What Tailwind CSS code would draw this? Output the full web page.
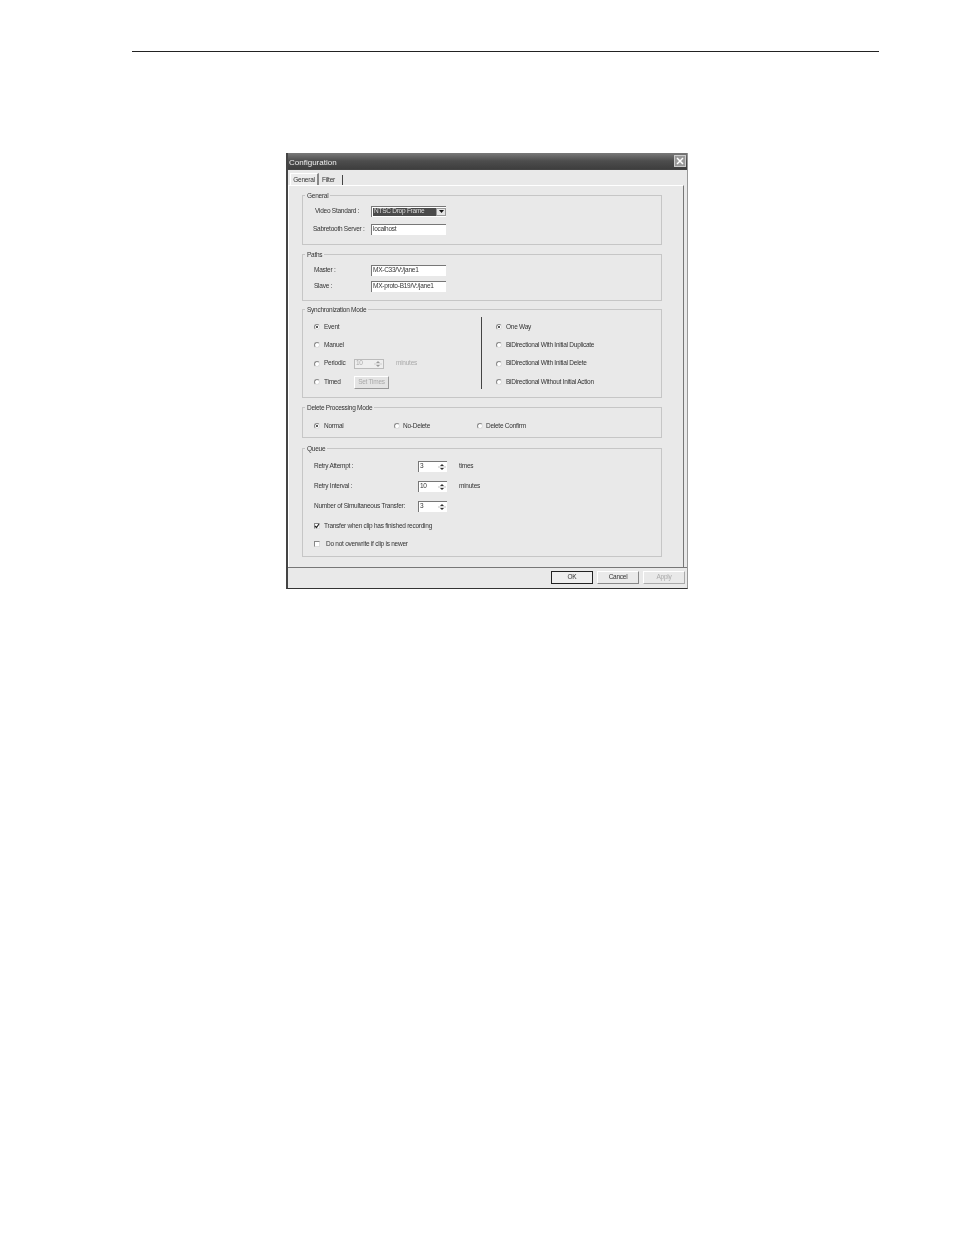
<!DOCTYPE html>
<html lang="en">
<head>
<meta charset="UTF-8">
<title>Configuration</title>
<script src="https://cdn.jsdelivr.net/npm/@tailwindcss/browser@4"></script>
</head>
<body class="bg-white font-['Liberation_Sans',sans-serif]">
  <!-- Page rule -->
  <div class="pt-[51px] pl-[132px]">
    <div class="w-[747px] h-px bg-[#222]"></div>
  </div>

  <!-- Dialog -->
  <div class="mt-[101px] ml-[286px] w-[402px] h-[436px] flex flex-col bg-[#e9e9e9] border-l-2 border-b border-r border-l-[#444] border-b-[#333] border-r-[#999] text-[6.5px] tracking-[-0.25px] leading-none text-[#333] blur-[0.3px]">
    <!-- Title bar -->
    <div class="h-[17px] flex items-center justify-between pl-px pr-px bg-gradient-to-b from-[#7a7a7a] via-[#4d4d4d] to-[#3e3e3e] border-b border-[#444]">
      <span class="pt-[3px] text-[8px] tracking-[0px] text-[#eee]">Configuration</span>
      <span class="w-[12px] h-[12px] flex items-center justify-center bg-[#999] border border-[#ccc]">
        <svg width="8" height="8" viewBox="0 0 8 8"><path d="M1 1L7 7M7 1L1 7" stroke="#fff" stroke-width="1.5"/></svg>
      </span>
    </div>

    <!-- Tabs -->
    <div class="h-[15px] flex items-end pl-[2px]">
      <div class="w-[29px] h-[12px] flex items-center justify-center pt-px bg-[#ededed] border-t border-l border-white border-r-2 border-r-[#888]">General</div>
      <div class="w-[24px] h-[10px] flex items-center pl-[3px] border-r border-[#444]">Filter</div>
    </div>

    <!-- Tab panel -->
    <div class="mr-[3px] h-[382px] pt-[9px] pl-[13px] pr-[21px] border-t border-l border-r border-t-white border-l-white border-r-[#777]">
      <!-- General -->
      <div class="relative h-[50px] border border-[#c6c6c6] pt-[6px]">
        <span class="absolute -top-[3px] left-[2px] px-[2px] bg-[#e9e9e9]">General</span>
        <div class="flex items-center h-[18px]">
          <span class="w-[68px] pl-[12px]">Video Standard :</span>
          <div class="flex items-center w-[75px] h-[11px] bg-white border-t border-l border-[#777] pl-px py-px">
            <span class="flex-1 h-full flex items-center pl-px bg-[#4a4a4a] text-[#ddd]">NTSC Drop Frame</span>
            <span class="w-[10px] h-full flex items-center justify-center bg-[#e4e4e4] border border-[#999]">
              <svg width="5" height="3" viewBox="0 0 5 3"><path d="M0 0H5L2.5 3Z" fill="#111"/></svg>
            </span>
          </div>
        </div>
        <div class="flex items-center h-[18px]">
          <span class="w-[68px] pl-[10px] whitespace-nowrap">Sabretooth Server :</span>
          <span class="w-[75px] h-[11px] flex items-center pl-px bg-white border-t border-l border-[#777]">localhost</span>
        </div>
      </div>

      <!-- Paths -->
      <div class="relative mt-[9px] h-[47px] border border-[#c6c6c6] pt-[7px]">
        <span class="absolute -top-[3px] left-[2px] px-[2px] bg-[#e9e9e9]">Paths</span>
        <div class="flex items-center h-[16px]">
          <span class="w-[68px] pl-[11px]">Master :</span>
          <span class="w-[75px] h-[11px] flex items-center pl-px bg-white border-t border-l border-[#777]">MX-C33/V:/jane1</span>
        </div>
        <div class="flex items-center h-[16px]">
          <span class="w-[68px] pl-[11px]">Slave :</span>
          <span class="w-[75px] h-[11px] flex items-center pl-px bg-white border-t border-l border-[#777]">MX-proto-B19/V:/jane1</span>
        </div>
      </div>

      <!-- Synchronization Mode -->
      <div class="relative mt-[8px] h-[89px] border border-[#c6c6c6] pt-[8px] flex">
        <span class="absolute -top-[3px] left-[2px] px-[2px] bg-[#e9e9e9]">Synchronization Mode</span>
        <div class="w-[178px] pl-[11px]">
          <div class="flex items-center gap-[4px] h-[18.3px]">
            <span class="w-[6px] h-[6px] rounded-full flex items-center justify-center bg-white border border-[#888] border-r-[#ddd] border-b-[#ddd]"><span class="w-[2px] h-[2px] rounded-full bg-[#222]"></span></span>
            <span>Event</span>
          </div>
          <div class="flex items-center gap-[4px] h-[18.3px]">
            <span class="w-[6px] h-[6px] rounded-full bg-white border border-[#888] border-r-[#ddd] border-b-[#ddd]"></span>
            <span>Manuel</span>
          </div>
          <div class="flex items-center gap-[4px] h-[18.3px]">
            <span class="w-[6px] h-[6px] rounded-full bg-white border border-[#888] border-r-[#ddd] border-b-[#ddd]"></span>
            <span class="w-[26px]">Periodic</span>
            <span class="w-[30px] h-[10px] flex items-center justify-between pl-px pr-px border border-[#bbb] bg-[#eee] text-[#aaa]">10
              <svg width="8" height="8" viewBox="0 0 8 8"><path d="M2 3L4 1L6 3ZM2 5L4 7L6 5Z" fill="#999"/><path d="M0 4H8" stroke="#bbb" stroke-width="0.6"/></svg>
            </span>
            <span class="ml-[8px] text-[#aaa]">minutes</span>
          </div>
          <div class="flex items-center gap-[4px] h-[18.3px]">
            <span class="w-[6px] h-[6px] rounded-full bg-white border border-[#888] border-r-[#ddd] border-b-[#ddd]"></span>
            <span class="w-[26px]">Timed</span>
            <span class="w-[35px] h-[13px] flex items-center justify-center bg-[#e4e4e4] border border-white border-r-[#999] border-b-[#999] text-[#aaa]">Set Times</span>
          </div>
        </div>
        <div class="-mt-px w-px h-[72px] bg-[#444]"></div>
        <div class="pl-[14px]">
          <div class="flex items-center gap-[4px] h-[18.3px]">
            <span class="w-[6px] h-[6px] rounded-full flex items-center justify-center bg-white border border-[#888] border-r-[#ddd] border-b-[#ddd]"><span class="w-[2px] h-[2px] rounded-full bg-[#222]"></span></span>
            <span>One Way</span>
          </div>
          <div class="flex items-center gap-[4px] h-[18.3px]">
            <span class="w-[6px] h-[6px] rounded-full bg-white border border-[#888] border-r-[#ddd] border-b-[#ddd]"></span>
            <span>BiDirectional With Initial Duplicate</span>
          </div>
          <div class="flex items-center gap-[4px] h-[18.3px]">
            <span class="w-[6px] h-[6px] rounded-full bg-white border border-[#888] border-r-[#ddd] border-b-[#ddd]"></span>
            <span>BiDirectional With Initial Delete</span>
          </div>
          <div class="flex items-center gap-[4px] h-[18.3px]">
            <span class="w-[6px] h-[6px] rounded-full bg-white border border-[#888] border-r-[#ddd] border-b-[#ddd]"></span>
            <span>BiDirectional Without Initial Action</span>
          </div>
        </div>
      </div>

      <!-- Delete Processing Mode -->
      <div class="relative mt-[9px] h-[31px] border border-[#c6c6c6] pt-[9px] pl-[11px] flex">
        <span class="absolute -top-[3px] left-[2px] px-[2px] bg-[#e9e9e9]">Delete Processing Mode</span>
        <div class="w-[80px] h-[18px] flex items-center gap-[4px]">
          <span class="w-[6px] h-[6px] rounded-full flex items-center justify-center bg-white border border-[#888] border-r-[#ddd] border-b-[#ddd]"><span class="w-[2px] h-[2px] rounded-full bg-[#222]"></span></span>
          <span>Normal</span>
        </div>
        <div class="w-[83px] h-[18px] flex items-center gap-[3px]">
          <span class="w-[6px] h-[6px] rounded-full bg-white border border-[#888] border-r-[#ddd] border-b-[#ddd]"></span>
          <span>No-Delete</span>
        </div>
        <div class="h-[18px] flex items-center gap-[3px]">
          <span class="w-[6px] h-[6px] rounded-full bg-white border border-[#888] border-r-[#ddd] border-b-[#ddd]"></span>
          <span>Delete Confirm</span>
        </div>
      </div>

      <!-- Queue -->
      <div class="relative mt-[10px] h-[109px] border border-[#c6c6c6] pt-[7px] pl-[11px]">
        <span class="absolute -top-[3px] left-[2px] px-[2px] bg-[#e9e9e9]">Queue</span>
        <div class="flex items-center h-[20px]">
          <span class="w-[104px]">Retry Attempt :</span>
          <span class="w-[29px] h-[11px] flex items-center justify-between pl-px pr-px bg-white border-t border-l border-[#777]">3
            <svg width="8" height="8" viewBox="0 0 8 8"><path d="M2 3L4 1L6 3ZM2 5L4 7L6 5Z" fill="#333"/><path d="M0 4H8" stroke="#999" stroke-width="0.6"/></svg>
          </span>
          <span class="ml-[12px]">times</span>
        </div>
        <div class="flex items-center h-[20px]">
          <span class="w-[104px]">Retry Interval :</span>
          <span class="w-[29px] h-[11px] flex items-center justify-between pl-px pr-px bg-white border-t border-l border-[#777]">10
            <svg width="8" height="8" viewBox="0 0 8 8"><path d="M2 3L4 1L6 3ZM2 5L4 7L6 5Z" fill="#333"/><path d="M0 4H8" stroke="#999" stroke-width="0.6"/></svg>
          </span>
          <span class="ml-[12px]">minutes</span>
        </div>
        <div class="flex items-center h-[20px]">
          <span class="w-[104px]">Number of Simultaneous Transfer:</span>
          <span class="w-[29px] h-[11px] flex items-center justify-between pl-px pr-px bg-white border-t border-l border-[#777]">3
            <svg width="8" height="8" viewBox="0 0 8 8"><path d="M2 3L4 1L6 3ZM2 5L4 7L6 5Z" fill="#333"/><path d="M0 4H8" stroke="#999" stroke-width="0.6"/></svg>
          </span>
        </div>
        <div class="flex items-center gap-[4px] h-[20px]">
          <span class="w-[6px] h-[6px] flex items-center justify-center bg-white border border-[#888] border-r-[#ddd] border-b-[#ddd]">
            <svg width="6" height="6" viewBox="0 0 6 6" class="shrink-0"><path d="M1 3L2.5 4.5L5 1" fill="none" stroke="#222" stroke-width="1.2"/></svg>
          </span>
          <span>Transfer when clip has finished recording</span>
        </div>
        <div class="flex items-center gap-[6px] h-[16px]">
          <span class="w-[6px] h-[6px] bg-white border border-[#888] border-r-[#ddd] border-b-[#ddd]"></span>
          <span>Do not overwrite if clip is newer</span>
        </div>
      </div>
    </div>

    <!-- Buttons -->
    <div class="flex-1 border-t border-[#777] pt-[3px] pr-[2px] flex justify-end gap-[4px]">
      <span class="w-[42px] h-[13px] flex items-center justify-center border border-[#222] bg-[#eee]">OK</span>
      <span class="w-[42px] h-[13px] flex items-center justify-center border border-white border-r-[#888] border-b-[#888] bg-[#eaeaea]">Cancel</span>
      <span class="w-[42px] h-[13px] flex items-center justify-center border border-white border-r-[#aaa] border-b-[#aaa] bg-[#e9e9e9] text-[#aaa]">Apply</span>
    </div>
  </div>
</body>
</html>
